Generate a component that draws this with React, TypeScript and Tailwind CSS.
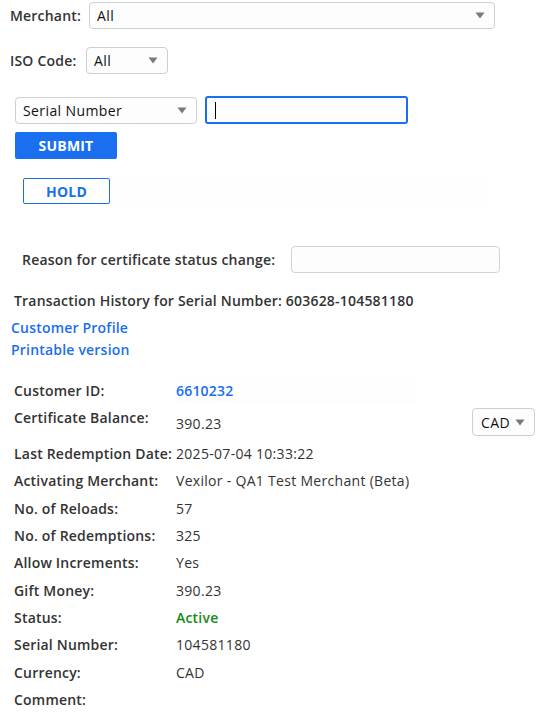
import React from "react";

const Caret = () => (
  <svg width="10" height="7" viewBox="0 0 10 7" className="shrink-0">
    <path d="M0.5 0.5 L9.5 0.5 L5 6.5 Z" fill="#7a7a7a" />
  </svg>
);

function FakeSelect({ value, className }: { value: string; className: string }) {
  return (
    <div
      className={
        "flex items-center justify-between rounded-[4px] border border-[#cfcfcf] bg-[#fdfdfd] pl-[7px] pr-[9px] text-[14px] tracking-[0.4px] text-[#111] " +
        className
      }
    >
      <span>{value}</span>
      <Caret />
    </div>
  );
}

const rows: { label: string; value: string; kind?: "link" | "green" }[] = [
  { label: "Last Redemption Date:", value: "2025-07-04 10:33:22" },
  { label: "Activating Merchant:", value: "Vexilor - QA1 Test Merchant (Beta)" },
  { label: "No. of Reloads:", value: "57" },
  { label: "No. of Redemptions:", value: "325" },
  { label: "Allow Increments:", value: "Yes" },
  { label: "Gift Money:", value: "390.23" },
  { label: "Status:", value: "Active", kind: "green" },
  { label: "Serial Number:", value: "104581180" },
  { label: "Currency:", value: "CAD" },
  { label: "Comment:", value: "" },
];

export default function App() {
  return (
    <div
      className="relative h-[726px] w-[540px] overflow-hidden bg-white text-[14px] tracking-[0.2px] text-[#333]"
      style={{ fontFamily: "'Open Sans', Lato, sans-serif" }}
    >
      {/* Merchant */}
      <div className="mt-[1px] flex h-[27px] items-center pl-[10px] pt-[1px]">
        <span className="w-[79px] font-semibold text-[#333]">Merchant:</span>
        <FakeSelect value="All" className="h-[27px] w-[406px]" />
      </div>

      {/* ISO Code */}
      <div className="mt-[19px] flex h-[26px] items-center pl-[10px]">
        <span className="w-[76px] font-semibold text-[#333]">ISO Code:</span>
        <FakeSelect value="All" className="h-[27px] w-[82px]" />
      </div>

      {/* Search row */}
      <div className="mt-[23px] flex items-center pl-[15px]">
        <FakeSelect value="Serial Number" className="h-[27px] w-[182px]" />
        <div className="ml-[8px] flex h-[28px] w-[203px] items-center rounded-[3px] border-2 border-[#1a6ef0] bg-[#fdfdfd] pl-[8px]">
          <span className="h-[17px] w-px bg-black" />
        </div>
      </div>

      {/* Submit */}
      <div className="mt-[8px] flex pl-[15px]">
        <div className="flex h-[27px] w-[102px] items-center justify-center rounded-[2px] bg-[#1a6ef0] text-[14px] font-bold text-white">
          SUBMIT
        </div>
      </div>

      {/* Hold */}
      <div className="mt-[19px] flex h-[27px] pl-[23px]">
        <div className="flex h-[26px] w-[87px] items-center justify-center rounded-[2px] border border-[#1a6ef0] bg-white text-[14px] font-bold text-[#1a6ef0]">
          HOLD
        </div>
        <div className="-mt-[3px] h-[33px] w-[377px] bg-[#fefefe]" />
      </div>

      {/* Reason */}
      <div className="mt-[41px] flex items-center pl-[22px]">
        <span className="w-[269px] font-semibold text-[#333]">Reason for certificate status change:</span>
        <div className="h-[27px] w-[209px] rounded-[4px] border border-[#d4d4d4] bg-[#fdfdfd]" />
      </div>

      {/* Heading */}
      <div className="mt-[18px] pl-[14px] font-semibold leading-[20px] text-[#333]">
        Transaction History for Serial Number: 603628-104581180
      </div>

      {/* Links */}
      <div className="mt-[6px] flex flex-col pl-[11px] font-semibold leading-[22px] text-[#1a6ef0]">
        <span>Customer Profile</span>
        <span>Printable version</span>
      </div>

      {/* Detail table */}
      <div className="mt-[16px] pl-[10px]">
        <div className="flex h-[27px] items-center">
          <span className="w-[166px] pl-[4px] font-semibold text-[#333]">Customer ID:</span>
          <span className="w-[240px] bg-[#fefefe] font-semibold leading-[27px] text-[#1a6ef0]">6610232</span>
        </div>
        <div className="flex h-[36px] items-center">
          <span className="w-[166px] self-start pl-[4px] pt-[3px] font-semibold text-[#333]">Certificate Balance:</span>
          <span className="w-[240px] pt-[2px] tracking-[0.3px] text-[#333]">390.23</span>
          <FakeSelect value="CAD" className="ml-[56px] h-[28px] w-[63px] pl-[8px] pr-[7px]" />
        </div>
        {rows.map((r) => (
          <div key={r.label} className="flex h-[27.3px] items-center">
            <span className="w-[166px] pl-[4px] font-semibold text-[#333]">{r.label}</span>
            <span
              className={
                r.kind === "green"
                  ? "font-semibold text-[#16891a]"
                  : "tracking-[0.3px] text-[#333]"
              }
            >
              {r.value}
            </span>
          </div>
        ))}
      </div>
    </div>
  );
}
